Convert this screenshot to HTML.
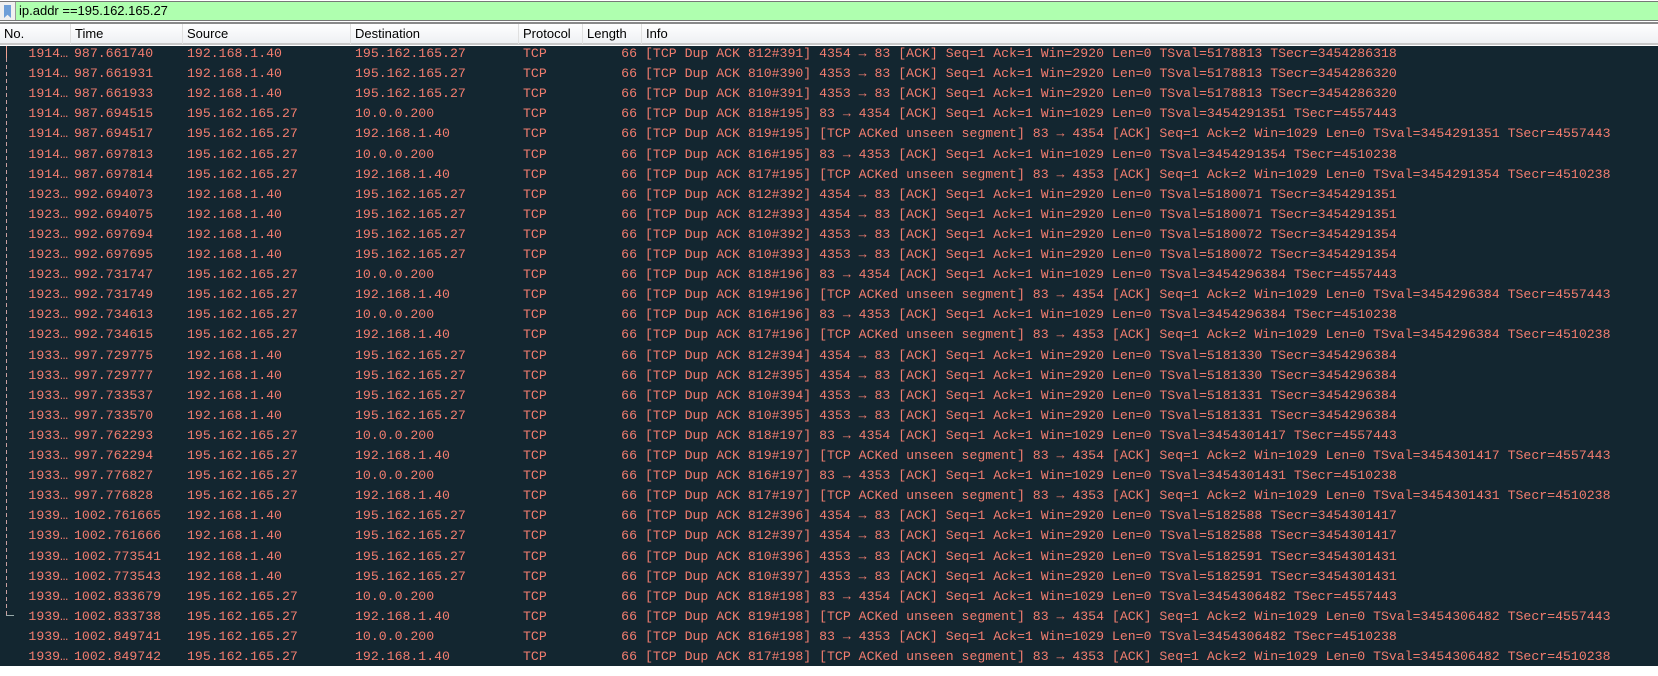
<!DOCTYPE html>
<html><head><meta charset="utf-8"><style>
*{margin:0;padding:0;box-sizing:border-box}
body{width:1658px;height:676px;background:#fff;position:relative;overflow:hidden;font-family:"Liberation Sans",sans-serif}
#fb{position:absolute;left:0;top:1px;width:1658px;height:20px;border-top:1px solid #777;border-bottom:1px solid #777;background:#f0f0f0}
#fbg{position:absolute;left:15px;top:0;right:0;bottom:0;background:#afffaf;border-left:1px solid #999;font-size:13px;line-height:18px;padding-left:3px;color:#000}
#bm{position:absolute;left:4px;top:3px;width:7px;height:13px;background:#6f9fd8;clip-path:polygon(0 0,100% 0,100% 100%,50% 75%,0 100%)}
#hl{position:absolute;left:0;top:22px;width:1658px;height:2px;background:#8a8a8a}
#hd{position:absolute;left:0;top:24px;width:1658px;height:21px;background:linear-gradient(#fff,#eef0f3);border-bottom:2px solid #c8c8c8;font-size:13px;line-height:20px;color:#000}
#hd span{position:absolute;top:0;height:20px;border-left:1px solid #e0e0e0;padding-left:4px}
#tb{position:absolute;left:0;top:46px;width:1658px;height:620px;background:#132630}
.r{position:absolute;left:0;height:20px;width:1658px;font-family:"Liberation Mono",monospace;font-size:13.2px;line-height:20px;color:#f27d6f;white-space:pre}
.r span{position:absolute;top:0}
.n{right:1590px}
.t{left:74px}.s{left:187px}.d{left:355px}.p{left:523px}.l{right:1021px}.i{left:645px}
</style></head><body>
<div id="fb"><div id="bm"></div><div id="fbg">ip.addr ==195.162.165.27</div></div>
<div id="hl"></div>
<div id="hd"><span style="left:0;border:none">No.</span><span style="left:70px">Time</span><span style="left:182px">Source</span><span style="left:350px">Destination</span><span style="left:518px">Protocol</span><span style="left:582px">Length</span><span style="left:641px">Info</span></div>
<div id="tb">
<div style="position:absolute;left:6px;top:0;width:1px;height:12px;background:#f0a090"></div>
<div style="position:absolute;left:6px;top:12px;width:1px;height:557px;background:repeating-linear-gradient(#c8a0a0 0 4px,transparent 4px 7px)"></div>
<div style="position:absolute;left:6px;top:569px;width:8px;height:1px;background:#9aa"></div>
</div>
<div id="rows"></div>
<script>
var d=[
["1914…","987.661740","192.168.1.40","195.162.165.27","[TCP Dup ACK 812#391] 4354 → 83 [ACK] Seq=1 Ack=1 Win=2920 Len=0 TSval=5178813 TSecr=3454286318"],
["1914…","987.661931","192.168.1.40","195.162.165.27","[TCP Dup ACK 810#390] 4353 → 83 [ACK] Seq=1 Ack=1 Win=2920 Len=0 TSval=5178813 TSecr=3454286320"],
["1914…","987.661933","192.168.1.40","195.162.165.27","[TCP Dup ACK 810#391] 4353 → 83 [ACK] Seq=1 Ack=1 Win=2920 Len=0 TSval=5178813 TSecr=3454286320"],
["1914…","987.694515","195.162.165.27","10.0.0.200","[TCP Dup ACK 818#195] 83 → 4354 [ACK] Seq=1 Ack=1 Win=1029 Len=0 TSval=3454291351 TSecr=4557443"],
["1914…","987.694517","195.162.165.27","192.168.1.40","[TCP Dup ACK 819#195] [TCP ACKed unseen segment] 83 → 4354 [ACK] Seq=1 Ack=2 Win=1029 Len=0 TSval=3454291351 TSecr=4557443"],
["1914…","987.697813","195.162.165.27","10.0.0.200","[TCP Dup ACK 816#195] 83 → 4353 [ACK] Seq=1 Ack=1 Win=1029 Len=0 TSval=3454291354 TSecr=4510238"],
["1914…","987.697814","195.162.165.27","192.168.1.40","[TCP Dup ACK 817#195] [TCP ACKed unseen segment] 83 → 4353 [ACK] Seq=1 Ack=2 Win=1029 Len=0 TSval=3454291354 TSecr=4510238"],
["1923…","992.694073","192.168.1.40","195.162.165.27","[TCP Dup ACK 812#392] 4354 → 83 [ACK] Seq=1 Ack=1 Win=2920 Len=0 TSval=5180071 TSecr=3454291351"],
["1923…","992.694075","192.168.1.40","195.162.165.27","[TCP Dup ACK 812#393] 4354 → 83 [ACK] Seq=1 Ack=1 Win=2920 Len=0 TSval=5180071 TSecr=3454291351"],
["1923…","992.697694","192.168.1.40","195.162.165.27","[TCP Dup ACK 810#392] 4353 → 83 [ACK] Seq=1 Ack=1 Win=2920 Len=0 TSval=5180072 TSecr=3454291354"],
["1923…","992.697695","192.168.1.40","195.162.165.27","[TCP Dup ACK 810#393] 4353 → 83 [ACK] Seq=1 Ack=1 Win=2920 Len=0 TSval=5180072 TSecr=3454291354"],
["1923…","992.731747","195.162.165.27","10.0.0.200","[TCP Dup ACK 818#196] 83 → 4354 [ACK] Seq=1 Ack=1 Win=1029 Len=0 TSval=3454296384 TSecr=4557443"],
["1923…","992.731749","195.162.165.27","192.168.1.40","[TCP Dup ACK 819#196] [TCP ACKed unseen segment] 83 → 4354 [ACK] Seq=1 Ack=2 Win=1029 Len=0 TSval=3454296384 TSecr=4557443"],
["1923…","992.734613","195.162.165.27","10.0.0.200","[TCP Dup ACK 816#196] 83 → 4353 [ACK] Seq=1 Ack=1 Win=1029 Len=0 TSval=3454296384 TSecr=4510238"],
["1923…","992.734615","195.162.165.27","192.168.1.40","[TCP Dup ACK 817#196] [TCP ACKed unseen segment] 83 → 4353 [ACK] Seq=1 Ack=2 Win=1029 Len=0 TSval=3454296384 TSecr=4510238"],
["1933…","997.729775","192.168.1.40","195.162.165.27","[TCP Dup ACK 812#394] 4354 → 83 [ACK] Seq=1 Ack=1 Win=2920 Len=0 TSval=5181330 TSecr=3454296384"],
["1933…","997.729777","192.168.1.40","195.162.165.27","[TCP Dup ACK 812#395] 4354 → 83 [ACK] Seq=1 Ack=1 Win=2920 Len=0 TSval=5181330 TSecr=3454296384"],
["1933…","997.733537","192.168.1.40","195.162.165.27","[TCP Dup ACK 810#394] 4353 → 83 [ACK] Seq=1 Ack=1 Win=2920 Len=0 TSval=5181331 TSecr=3454296384"],
["1933…","997.733570","192.168.1.40","195.162.165.27","[TCP Dup ACK 810#395] 4353 → 83 [ACK] Seq=1 Ack=1 Win=2920 Len=0 TSval=5181331 TSecr=3454296384"],
["1933…","997.762293","195.162.165.27","10.0.0.200","[TCP Dup ACK 818#197] 83 → 4354 [ACK] Seq=1 Ack=1 Win=1029 Len=0 TSval=3454301417 TSecr=4557443"],
["1933…","997.762294","195.162.165.27","192.168.1.40","[TCP Dup ACK 819#197] [TCP ACKed unseen segment] 83 → 4354 [ACK] Seq=1 Ack=2 Win=1029 Len=0 TSval=3454301417 TSecr=4557443"],
["1933…","997.776827","195.162.165.27","10.0.0.200","[TCP Dup ACK 816#197] 83 → 4353 [ACK] Seq=1 Ack=1 Win=1029 Len=0 TSval=3454301431 TSecr=4510238"],
["1933…","997.776828","195.162.165.27","192.168.1.40","[TCP Dup ACK 817#197] [TCP ACKed unseen segment] 83 → 4353 [ACK] Seq=1 Ack=2 Win=1029 Len=0 TSval=3454301431 TSecr=4510238"],
["1939…","1002.761665","192.168.1.40","195.162.165.27","[TCP Dup ACK 812#396] 4354 → 83 [ACK] Seq=1 Ack=1 Win=2920 Len=0 TSval=5182588 TSecr=3454301417"],
["1939…","1002.761666","192.168.1.40","195.162.165.27","[TCP Dup ACK 812#397] 4354 → 83 [ACK] Seq=1 Ack=1 Win=2920 Len=0 TSval=5182588 TSecr=3454301417"],
["1939…","1002.773541","192.168.1.40","195.162.165.27","[TCP Dup ACK 810#396] 4353 → 83 [ACK] Seq=1 Ack=1 Win=2920 Len=0 TSval=5182591 TSecr=3454301431"],
["1939…","1002.773543","192.168.1.40","195.162.165.27","[TCP Dup ACK 810#397] 4353 → 83 [ACK] Seq=1 Ack=1 Win=2920 Len=0 TSval=5182591 TSecr=3454301431"],
["1939…","1002.833679","195.162.165.27","10.0.0.200","[TCP Dup ACK 818#198] 83 → 4354 [ACK] Seq=1 Ack=1 Win=1029 Len=0 TSval=3454306482 TSecr=4557443"],
["1939…","1002.833738","195.162.165.27","192.168.1.40","[TCP Dup ACK 819#198] [TCP ACKed unseen segment] 83 → 4354 [ACK] Seq=1 Ack=2 Win=1029 Len=0 TSval=3454306482 TSecr=4557443"],
["1939…","1002.849741","195.162.165.27","10.0.0.200","[TCP Dup ACK 816#198] 83 → 4353 [ACK] Seq=1 Ack=1 Win=1029 Len=0 TSval=3454306482 TSecr=4510238"],
["1939…","1002.849742","195.162.165.27","192.168.1.40","[TCP Dup ACK 817#198] [TCP ACKed unseen segment] 83 → 4353 [ACK] Seq=1 Ack=2 Win=1029 Len=0 TSval=3454306482 TSecr=4510238"]
];
var h="";
for(var k=0;k<d.length;k++){var r=d[k];var y=(44+k*20.1).toFixed(1);
h+='<div class="r" style="top:'+y+'px"><span class="n">'+r[0]+'</span><span class="t">'+r[1]+'</span><span class="s">'+r[2]+'</span><span class="d">'+r[3]+'</span><span class="p">TCP</span><span class="l">66</span><span class="i">'+r[4]+'</span></div>';}
document.getElementById("rows").innerHTML=h;
</script>
</body></html>
